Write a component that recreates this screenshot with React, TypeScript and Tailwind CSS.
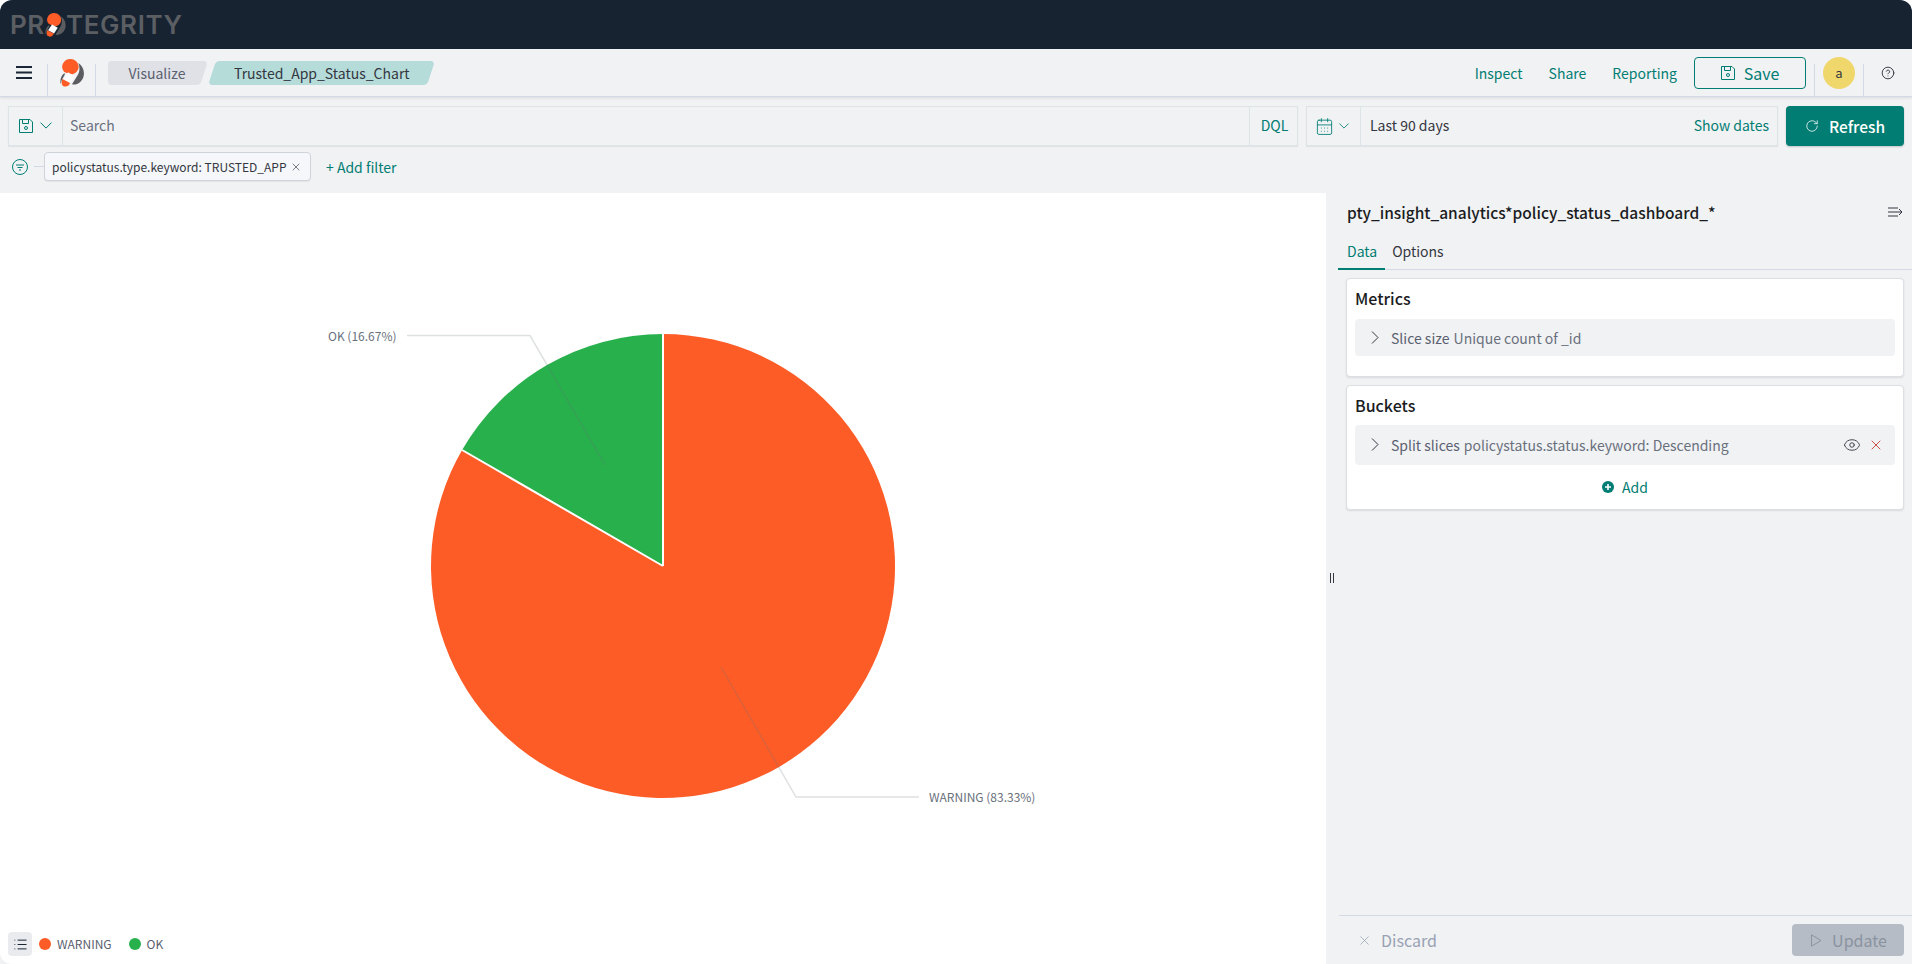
import React from "react";
import { X, CalendarDays, RotateCw, Eye, List, CircleHelp } from "lucide-react";

const Mark = ({ className }: { className?: string }) => (
  <svg viewBox="0 0 72 84" className={className}>
    <path d="M32 0 A 25 23.5 0 0 1 38 46 L 24 44 L 12 38 A 25 23.5 0 0 1 32 0 Z" fill="#fd5c27" />
    <path d="M55 12 C 68 20 74 36 71 50 C 68 68 50 80 36 76 L 52 50 C 60 38 60 25 55 12 Z" fill="#5a5c5f" />
    <path d="M24 40 L 44 52 L 31 72 L 10 60 Z" fill="#ffffff" />
    <path d="M7 60 L 30 72 C 28 82 15 86 8 80 C 4 76 4 68 7 60 Z" fill="#fd5c27" />
    <path d="M14 42 C 4 48 -1 62 2 76 C 3 70 4 65 7 60 L 14 48 Z" fill="#5a5c5f" />
  </svg>
);

const Floppy = ({ size }: { size: number }) => (
  <svg width={size} height={size} viewBox="0 0 14 14" fill="none" stroke="currentColor" strokeWidth="1">
    <path d="M0.5 0.5 H11 L13.5 3 V13.5 H0.5 Z" />
    <path d="M3.5 0.5 V4.5 H9.5 V0.5" />
    <circle cx="7" cy="9" r="1.5" />
  </svg>
);

const Chevron = ({ w }: { w: number }) => (
  <svg width={w} height={w * 0.6} viewBox="0 0 12 7" fill="none" stroke="currentColor" strokeWidth="1">
    <path d="M0.5 0.5 L6 6 L11.5 0.5" />
  </svg>
);

const RowChevron = () => (
  <svg width="8" height="13" viewBox="0 0 8 13" fill="none" stroke="#343741" strokeWidth="1">
    <path d="M1 0.5 L7 6.5 L1 12.5" />
  </svg>
);

export default function App() {
  return (
    <div
      className="w-[1912px] h-[964px] overflow-hidden flex flex-col bg-[#f1f2f4] text-[#343741] leading-5 rounded-t-xl"
      style={{ fontFamily: '"Noto Sans CJK JP", "Noto Sans", sans-serif' }}
    >
      {/* Brand bar */}
      <header className="h-[49px] shrink-0 bg-[#172331] flex items-center pl-[10px]">
        <div className="flex items-center text-[#5b5e62] text-[26px] font-semibold leading-none tracking-[0.6px]" style={{ fontFamily: "Inter, sans-serif" }}>
          <span>PR</span>
          <Mark className="w-[23px] h-[24px] -ml-[1px] -mr-[1px]" />
          <span>TEGRITY</span>
        </div>
      </header>

      {/* Nav bar */}
      <nav className="h-[48px] shrink-0 flex items-stretch border-b border-[#d3dae6] shadow-[0_1px_3px_rgba(0,0,0,0.1)] z-10">
        <div className="w-[47px] flex items-center justify-center">
          <svg width="16" height="13" viewBox="0 0 16 13"><path d="M0 1h16M0 6.5h16M0 12h16" stroke="#1a2635" strokeWidth="2" /></svg>
        </div>
        <div className="relative w-[49px] flex items-center justify-center">
          <span className="absolute left-0 right-0 bottom-0 h-[32px] border-x border-[#d3dae6]" />
          <Mark className="w-[24px] h-[28px]" />
        </div>
        <div className="flex items-center ml-[12px]">
          <span className="relative h-[24px] w-[100px] flex items-center justify-center pr-[2px] text-[14px] text-[#5a6070]">
            <span className="absolute inset-y-0 left-0 w-[80px] bg-[#dfe1e6] rounded-l" />
            <span className="absolute inset-y-0 left-[70px] right-0 bg-[#dfe1e6] rounded-r -skew-x-[18deg] origin-top-right" />
            <span className="relative">Visualize</span>
          </span>
          <span className="ml-[4px] h-[24px] w-[219px] bg-[#b6dcda] rounded -skew-x-[18deg] flex items-center justify-center text-[14px] text-[#343741]">
            <span className="skew-x-[18deg]">Trusted_App_Status_Chart</span>
          </span>
        </div>
        <div className="ml-auto flex items-center">
          <span className="text-[14px] text-[#017d73] mr-[26px]">Inspect</span>
          <span className="text-[14px] text-[#017d73] mr-[26px]">Share</span>
          <span className="text-[14px] text-[#017d73] mr-[17px]">Reporting</span>
          <button className="w-[112px] h-[32px] border border-[#017d73] rounded flex items-center justify-center gap-[9px] text-[16px] text-[#017d73]">
            <Floppy size={14} />
            Save
          </button>
          <div className="relative ml-[8px] w-[50px] self-stretch flex items-center justify-center">
            <span className="absolute left-0 right-0 bottom-0 h-[32px] border-x border-[#d3dae6]" />
            <span className="w-[32px] h-[32px] rounded-full bg-[#f0d76b] flex items-center justify-center text-[13px]">a</span>
          </div>
          <div className="w-[48px] flex items-center justify-center">
            <CircleHelp size={14} strokeWidth={1.6} className="text-[#343741]" />
          </div>
        </div>
      </nav>

      {/* Query bar */}
      <div className="h-[40px] mt-[9px] shrink-0 flex pl-[8px] pr-[8px]">
        <div className="w-[1290px] flex border border-[#dde4e8] shadow-[0_1px_1px_rgba(0,0,0,0.06)]">
          <div className="w-[54px] flex items-center pl-[10px] gap-[7px] border-r border-[#dde4e8] text-[#017d73]">
            <Floppy size={14} />
            <Chevron w={12} />
          </div>
          <div className="flex-1 flex items-center pl-[7px] pb-[2px] text-[14px] text-[#69707d]">Search</div>
          <div className="w-[48px] flex items-center justify-center border-l border-[#dde4e8] pl-[2px] pb-[2px] text-[14px] text-[#017d73]">DQL</div>
        </div>
        <div className="w-[472px] ml-[8px] flex border border-[#dde4e8] shadow-[0_1px_1px_rgba(0,0,0,0.06)]">
          <div className="w-[54px] flex items-center pl-[8px] gap-[5px] border-r border-[#dde4e8] text-[#017d73]">
            <CalendarDays size={19} strokeWidth={1.1} />
            <Chevron w={10} />
          </div>
          <div className="flex-1 flex items-center pl-[9px] pb-[2px] text-[14px] text-[#343741]">Last 90 days</div>
          <div className="flex items-center pr-[8px] pb-[2px] text-[14px] text-[#017d73]">Show dates</div>
        </div>
        <button className="w-[118px] ml-[8px] bg-[#017d73] rounded flex items-center justify-center gap-[10px] pb-[1px] text-white text-[15.5px] font-medium shadow-[0_1px_2px_rgba(0,0,0,0.2)]">
          <RotateCw size={14} strokeWidth={1.3} />
          Refresh
        </button>
      </div>

      {/* Filter row */}
      <div className="h-[47px] shrink-0 flex items-start pl-[12px] pt-[6px]">
        <div className="h-[29px] flex items-center">
          <svg width="16" height="16" viewBox="0 0 16 16" fill="none" stroke="#017d73" strokeWidth="1">
            <circle cx="8" cy="8" r="7.5" />
            <path d="M4 6h8M5.5 8.5h5M7 11h2" />
          </svg>
          <span className="w-[10px] h-px ml-[6px] bg-[#d3dae6]" />
        </div>
        <div className="h-[29px] w-[267px] bg-[#f5f7fa] border border-[#cfd3da] rounded-sm flex items-center pl-[7px] pr-[8px] text-[12px] text-[#343741] shadow-[0_1px_1px_rgba(0,0,0,0.06)] justify-between whitespace-nowrap">
          <span>policystatus.type.keyword: TRUSTED_APP</span>
          <X size={12} strokeWidth={1.3} />
        </div>
        <span className="h-[29px] flex items-center ml-[15px] text-[14px] text-[#017d73]">+ Add filter</span>
      </div>

      {/* Main */}
      <main className="flex-1 flex min-h-0">
        <section className="w-[1326px] bg-white relative rounded-bl-xl">
          <svg className="absolute inset-0" width="1326" height="771" viewBox="0 193 1326 771">
            <path d="M663 566 L663 334 A232 232 0 1 1 462.1 450 Z" fill="#fd5c27" />
            <path d="M663 566 L462.1 450 A232 232 0 0 1 663 334 Z" fill="#27b04c" />
            <path d="M663 566 L663 334 M663 566 L462.1 450" stroke="#fff" strokeWidth="2" />
            <g fill="none" stroke="#69707d" strokeOpacity="0.22" strokeWidth="1.5">
              <path d="M407 335.5 H530 L605 465" />
              <path d="M721 667 L796 797 H919" />
            </g>
          </svg>
          <span className="absolute left-[328px] top-[133px] text-[12px] leading-5 text-[#69707d]">OK (16.67%)</span>
          <span className="absolute left-[929px] top-[594px] text-[12px] leading-5 text-[#69707d]">WARNING (83.33%)</span>
          <div className="absolute left-[8px] bottom-[8px] flex items-center">
            <div className="w-[24px] h-[24px] rounded bg-[#e9ebef] flex items-center justify-center">
              <List size={15} strokeWidth={1.6} className="text-[#1a2635]" />
            </div>
            <span className="w-[12px] h-[12px] rounded-full bg-[#fd5c27] ml-[7px]" />
            <span className="ml-[6px] text-[12px] text-[#5a6070]">WARNING</span>
            <span className="w-[12px] h-[12px] rounded-full bg-[#27b04c] ml-[17px]" />
            <span className="ml-[6px] text-[12px] text-[#5a6070]">OK</span>
          </div>
        </section>

        <div className="w-[12px] flex items-center justify-center">
          <span className="w-[4px] h-[10px] border-x border-[#343741] -translate-y-[1px]" />
        </div>

        <aside className="flex-1 flex flex-col">
          <div className="h-[38px] flex items-center justify-between pl-[9px] pr-[9px]">
            <h2 className="text-[15.5px] font-medium text-[#1a1c21]">pty_insight_analytics*policy_status_dashboard_*</h2>
            <svg width="15" height="12" viewBox="0 0 15 12" fill="none" stroke="#343741" strokeWidth="1"><path d="M0 2h10M0 6h14M0 10h10M11 3l3 3-3 3" /></svg>
          </div>
          <div className="h-[39px] flex border-b border-[#d3dae6] text-[14px] items-end">
            <span className="pl-[9px] pr-[8px] h-[29px] text-[#017d73] border-b-2 border-[#017d73] -mb-px">Data</span>
            <span className="pl-[7px] h-[29px] pt-[1px] text-[#343741]">Options</span>
          </div>
          <div className="flex-1 pt-[8px] pl-[8px] pr-[8px] flex flex-col gap-[8px]">
            <div className="h-[99px] bg-white rounded border border-[#dcdfe4] shadow-[0_1px_2px_rgba(0,0,0,0.1)] px-[8px] pt-[9px]">
              <h3 className="text-[16px] font-medium text-[#1a1c21]">Metrics</h3>
              <div className="mt-[11px] h-[37px] rounded bg-[#f1f2f4] flex items-center pl-[16px] text-[14px] text-[#69707d]">
                <RowChevron />
                <span className="ml-[12px] text-[#5a6070]">Slice size</span>
                <span className="ml-[4px]">Unique count of _id</span>
              </div>
            </div>
            <div className="h-[125px] bg-white rounded border border-[#dcdfe4] shadow-[0_1px_2px_rgba(0,0,0,0.1)] px-[8px] pt-[9px]">
              <h3 className="text-[16px] font-medium text-[#1a1c21]">Buckets</h3>
              <div className="mt-[10px] h-[40px] rounded bg-[#f1f2f4] flex items-center pl-[16px] pr-[11px] pb-[1px] text-[14px] text-[#69707d]">
                <RowChevron />
                <span className="ml-[12px] text-[#5a6070]">Split slices</span>
                <span className="ml-[4px]">policystatus.status.keyword: Descending</span>
                <Eye size={18} strokeWidth={1.2} className="ml-auto text-[#343741]" />
                <X size={16} strokeWidth={1.2} className="ml-[7px] text-[#bd271e]" />
              </div>
              <div className="mt-[12px] flex items-center justify-center gap-[8px] text-[14px] text-[#017d73]">
                <svg width="12" height="12" viewBox="0 0 12 12">
                  <circle cx="6" cy="6" r="6" fill="#017d73" />
                  <path d="M6 3v6M3 6h6" stroke="#fff" strokeWidth="1.6" />
                </svg>
                Add
              </div>
            </div>
          </div>
          <div className="h-[49px] ml-[1px] border-t border-[#d3dae6] flex items-center justify-between pl-[18px] pr-[8px] shrink-0">
            <div className="flex items-center gap-[9px] text-[16px] text-[#98a2b3]">
              <X size={15} strokeWidth={1.2} />
              Discard
            </div>
            <button className="w-[112px] h-[32px] rounded bg-[#b6bcc5] flex items-center justify-center gap-[10px] pl-[2px] text-[16px] text-[#8a93a0]">
              <svg width="11" height="13" viewBox="0 0 11 13" fill="none" stroke="currentColor" strokeWidth="1"><path d="M0.5 0.8 L10 6.5 L0.5 12.2 Z" /></svg>
              Update
            </button>
          </div>
        </aside>
      </main>
    </div>
  );
}
